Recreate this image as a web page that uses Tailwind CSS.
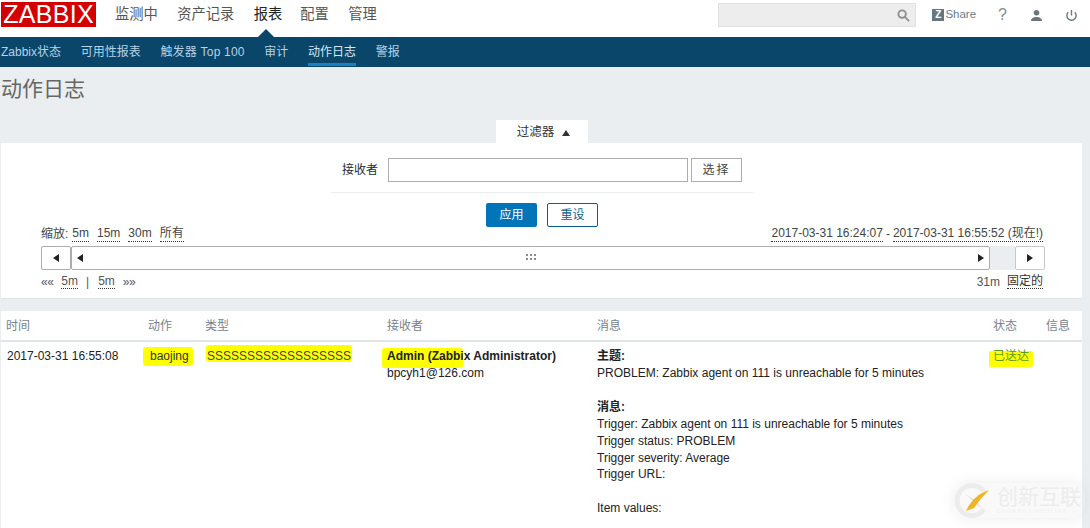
<!DOCTYPE html>
<html lang="zh-CN">
  <head>
    <meta charset="UTF-8" />
    <title>动作日志</title>
    <script src="https://cdn.jsdelivr.net/npm/@tailwindcss/browser@4"></script>
  </head>
  <body class="w-[1090px] h-[528px] overflow-hidden relative bg-[#ebeef0] text-[12px] text-[#1f2c33] font-['Liberation_Sans','Noto_Sans_CJK_SC',sans-serif]">
    <!-- Top menu -->
    <header class="h-[37px] bg-white flex items-start relative">
      <div class="ml-[1px] mt-[2px] w-[95px] h-[25px] bg-[#d40000] text-white text-[25px] leading-[25px] text-center tracking-[0.3px]">ZABBIX</div>
      <nav class="flex gap-[19.500px] ml-[19px] mt-[4px] text-[14.250px] leading-[20px] text-[#555]">
        <span>监测中</span>
        <span>资产记录</span>
        <span class="text-[#222] mr-[-1.500px]">报表</span>
        <span>配置</span>
        <span>管理</span>
      </nav>
      <div class="absolute left-[258px] top-[29px] w-0 h-0 border-x-[8px] border-x-transparent border-b-[8px] border-b-[#0a466a]"></div>
      <div class="ml-auto flex items-center mt-[3px] mr-[12px] h-[24px] text-[#6b7c87]">
        <div class="w-[198px] h-[24px] bg-[#ededed] border border-[#e2e2e2] flex items-center justify-end pr-[5px]">
          <svg width="13" height="13" viewBox="0 0 14 14" fill="none" stroke="#8a8f92" stroke-width="2"><circle cx="5.500" cy="5.500" r="4"/><path d="M8.500 8.500 13 13"/></svg>
        </div>
        <div class="ml-[16px] w-[12px] h-[12px] bg-[#67777f] text-white text-[10px] leading-[12px] font-bold text-center">Z</div>
        <span class="ml-[1px] text-[11.500px]">Share</span>
        <span class="ml-[22px] text-[16px] text-[#7f8c94]">?</span>
        <svg class="ml-[23px]" width="13" height="13" viewBox="0 0 14 14" fill="#67777f"><circle cx="7" cy="4" r="3"/><path d="M1 13c0-3 3-4.500 6-4.500s6 1.500 6 4.500z"/></svg>
        <svg class="ml-[22px]" width="13" height="13" viewBox="0 0 14 14" fill="none" stroke="#67777f" stroke-width="1.500"><path d="M7 1v6"/><path d="M3.500 3.500a5 5 0 1 0 7 0"/></svg>
      </div>
    </header>

    <!-- Sub menu -->
    <nav class="h-[30px] bg-[#0a466a] flex gap-[19.700px] text-[12px] leading-[30px] text-[#b5d3e6]">
      <span class="ml-[1px]">Zabbix状态</span>
      <span>可用性报表</span>
      <span class="tracking-[0.2px]">触发器 Top 100</span>
      <span>审计</span>
      <span class="relative text-[#d5e6f1]">动作日志<span class="absolute left-0 right-0 bottom-[1px] h-[3px] bg-[#1b7fc0]"></span></span>
      <span>警报</span>
    </nav>

    <h1 class="pl-[1px] pt-[8px] h-[53px] text-[21px] leading-[28px] text-[#666]">动作日志</h1>

    <!-- Filter tab -->
    <div class="ml-[496px] w-[92px] h-[23px] pl-[3px] pt-[2px] bg-white flex items-center justify-center gap-[8px] text-[#333]">
      <span class="text-[12.500px]">过滤器</span>
      <span class="w-0 h-0 border-x-[4px] border-x-transparent border-b-[6px] border-b-[#333]"></span>
    </div>

    <!-- Filter panel -->
    <section class="ml-[1px] w-[1081px] h-[156px] bg-white border-b border-[#dfe4e7]">
      <div class="flex justify-center items-center pt-[15px] pl-[1px]">
        <span class="mr-[10px]">接收者</span>
        <div class="w-[300px] h-[24px] border border-[#acacac] bg-white"></div>
        <div class="ml-[3px] w-[51px] h-[24px] border border-[#acacac] text-center leading-[22px] text-[#444] tracking-[2px]">选择</div>
      </div>
      <div class="mt-[10px] w-[422px] ml-[330px] border-t border-[#ebeef0]"></div>
      <div class="flex justify-center gap-[10px] mt-[10px] pl-[1px]">
        <div class="w-[51px] h-[24px] rounded-[2px] bg-[#0275b8] text-white text-center leading-[24px]">应用</div>
        <div class="w-[51px] h-[24px] rounded-[2px] border border-[#0a5f8f] bg-white text-[#0a5f8f] text-center leading-[22px]">重设</div>
      </div>

      <div class="ml-[40px] w-[1004px] mt-[-2px]">
        <div class="flex justify-between h-[19px] pr-[2px] leading-[19px] text-[#444]">
          <div class="flex gap-[8px]">
            <span class="mr-[-4px]">缩放:</span>
            <span class="border-b border-dotted border-[#333] h-[17px] leading-[17px]">5m</span>
            <span class="border-b border-dotted border-[#333] h-[17px] leading-[17px]">15m</span>
            <span class="border-b border-dotted border-[#333] h-[17px] leading-[17px]">30m</span>
            <span class="border-b border-dotted border-[#333] h-[17px] leading-[17px]">所有</span>
          </div>
          <div class="flex gap-[3px]">
            <span class="border-b border-dotted border-[#333] h-[17px] leading-[17px]">2017-03-31 16:24:07</span>
            <span>-</span>
            <span class="border-b border-dotted border-[#333] h-[17px] leading-[17px]">2017-03-31 16:55:52 (现在!)</span>
          </div>
        </div>
        <!-- Scrollbar -->
        <div class="flex h-[24px] mt-[2px]">
          <div class="w-[30px] border border-[#acacac] rounded-[2px] flex items-center justify-center">
            <span class="w-0 h-0 border-y-[4px] border-y-transparent border-r-[6px] border-r-[#222]"></span>
          </div>
          <div class="w-[919px] border border-[#acacac] rounded-[2px] flex items-center justify-between px-[5px] relative">
            <span class="w-0 h-0 border-y-[4px] border-y-transparent border-r-[6px] border-r-[#222]"></span>
            <svg class="absolute left-[454px] top-[7px]" width="11" height="7" viewBox="0 0 11 7" fill="#8a8a8a"><rect x="0" y="0" width="2" height="2"/><rect x="4" y="0" width="2" height="2"/><rect x="8" y="0" width="2" height="2"/><rect x="0" y="4" width="2" height="2"/><rect x="4" y="4" width="2" height="2"/><rect x="8" y="4" width="2" height="2"/></svg>
            <span class="w-0 h-0 border-y-[4px] border-y-transparent border-l-[6px] border-l-[#222]"></span>
          </div>
          <div class="w-[25px] bg-[#ebeef0]"></div>
          <div class="w-[30px] border border-[#c8c8c8] rounded-[2px] flex items-center justify-center">
            <span class="w-0 h-0 border-y-[4px] border-y-transparent border-l-[6px] border-l-[#222]"></span>
          </div>
        </div>
        <div class="flex justify-between h-[19px] mt-[3px] pr-[2px] leading-[18px] text-[#555]">
          <div class="flex gap-[8px]">
            <span class="tracking-[-0.500px]">««</span>
            <span class="border-b border-dotted border-[#333] h-[16px] leading-[16px]">5m</span>
            <span class="mr-[1px]">|</span>
            <span class="border-b border-dotted border-[#333] h-[16px] leading-[16px]">5m</span>
            <span class="tracking-[-0.500px]">»»</span>
          </div>
          <div class="flex gap-[7px]">
            <span>31m</span>
            <span class="border-b border-dotted border-[#333] h-[16px] leading-[16px] text-[#333]">固定的</span>
          </div>
        </div>
      </div>
    </section>

    <!-- Results table -->
    <section class="ml-[1px] mt-[12px] w-[1081px] h-[217px] bg-white overflow-hidden">
      <div class="grid grid-cols-[142px_57px_182px_210px_396px_53px_36px] h-[31px] leading-[31px] text-[#77838c] border-b-2 border-[#dfe4e7] pl-[5px]">
        <span>时间</span>
        <span>动作</span>
        <span>类型</span>
        <span>接收者</span>
        <span>消息</span>
        <span>状态</span>
        <span>信息</span>
      </div>
      <div class="grid grid-cols-[142px_57px_182px_210px_396px_53px_36px] pl-[5px] pt-[6px] leading-[16.900px] text-[#222]">
        <span class="pl-[1px]">2017-03-31 16:55:08</span>
        <div class="relative">
          <span class="absolute left-[-5px] top-[-1px] w-[50px] h-[19px] rounded-[3px] bg-[#ffff00]"></span>
          <span class="relative pl-[2px] text-[#333]">baojing</span>
        </div>
        <div class="relative">
          <span class="absolute left-[1px] top-[-3px] w-[146px] h-[17px] rounded-[3px] bg-[#ffff00]"></span>
          <span class="relative pl-[2px] text-[#444]">SSSSSSSSSSSSSSSSSS</span>
        </div>
        <div class="relative">
          <span class="absolute left-[-5px] top-0 w-[81px] h-[20px] rounded-[3px] bg-[#ffff00]"></span>
          <p class="relative font-bold">Admin (Zabbix Administrator)</p>
          <p class="relative">bpcyh1@126.com</p>
        </div>
        <div>
          <p class="font-bold">主题:</p>
          <p>PROBLEM: Zabbix agent on 111 is unreachable for 5 minutes</p>
          <p class="h-[17px]"></p>
          <p class="font-bold">消息:</p>
          <p>Trigger: Zabbix agent on 111 is unreachable for 5 minutes</p>
          <p>Trigger status: PROBLEM</p>
          <p>Trigger severity: Average</p>
          <p>Trigger URL:</p>
          <p class="h-[17px]"></p>
          <p>Item values:</p>
        </div>
        <div class="relative">
          <span class="absolute left-[-4px] top-[3px] w-[44px] h-[16px] rounded-[2px] bg-[#ffff00]"></span>
          <span class="relative text-[#5f9a22]">已送达</span>
        </div>
        <span></span>
      </div>
    </section>

    <!-- Watermark -->
    <div class="absolute left-[955px] top-[483px] flex items-center gap-[7px] pr-[4px] bg-[#e6e6e6]/25 rounded-[12px] shadow-[0_0_14px_rgba(200,200,200,0.35)]">
      <svg width="35" height="35" viewBox="0 0 35 35" fill="none">
        <path d="M29 8.500A15 15 0 1 0 29 26.500" stroke="#ececec" stroke-width="5"/>
        <path d="M10 11l8 7-5 9 8-6 6 5-5-8z" fill="#e4e4e4"/>
        <path d="M34 7C24 10 16 17 11 28l8-3C24 18 29 12 34 7z" fill="#f0b429"/>
      </svg>
      <div>
        <div class="text-[21px] leading-[22px] text-[#ececec]">创新互联</div>
        <div class="text-[5px] leading-[7px] tracking-[1.500px] text-[#efefef]">CHUANGXINHULIAN</div>
      </div>
    </div>
  </body>
</html>
